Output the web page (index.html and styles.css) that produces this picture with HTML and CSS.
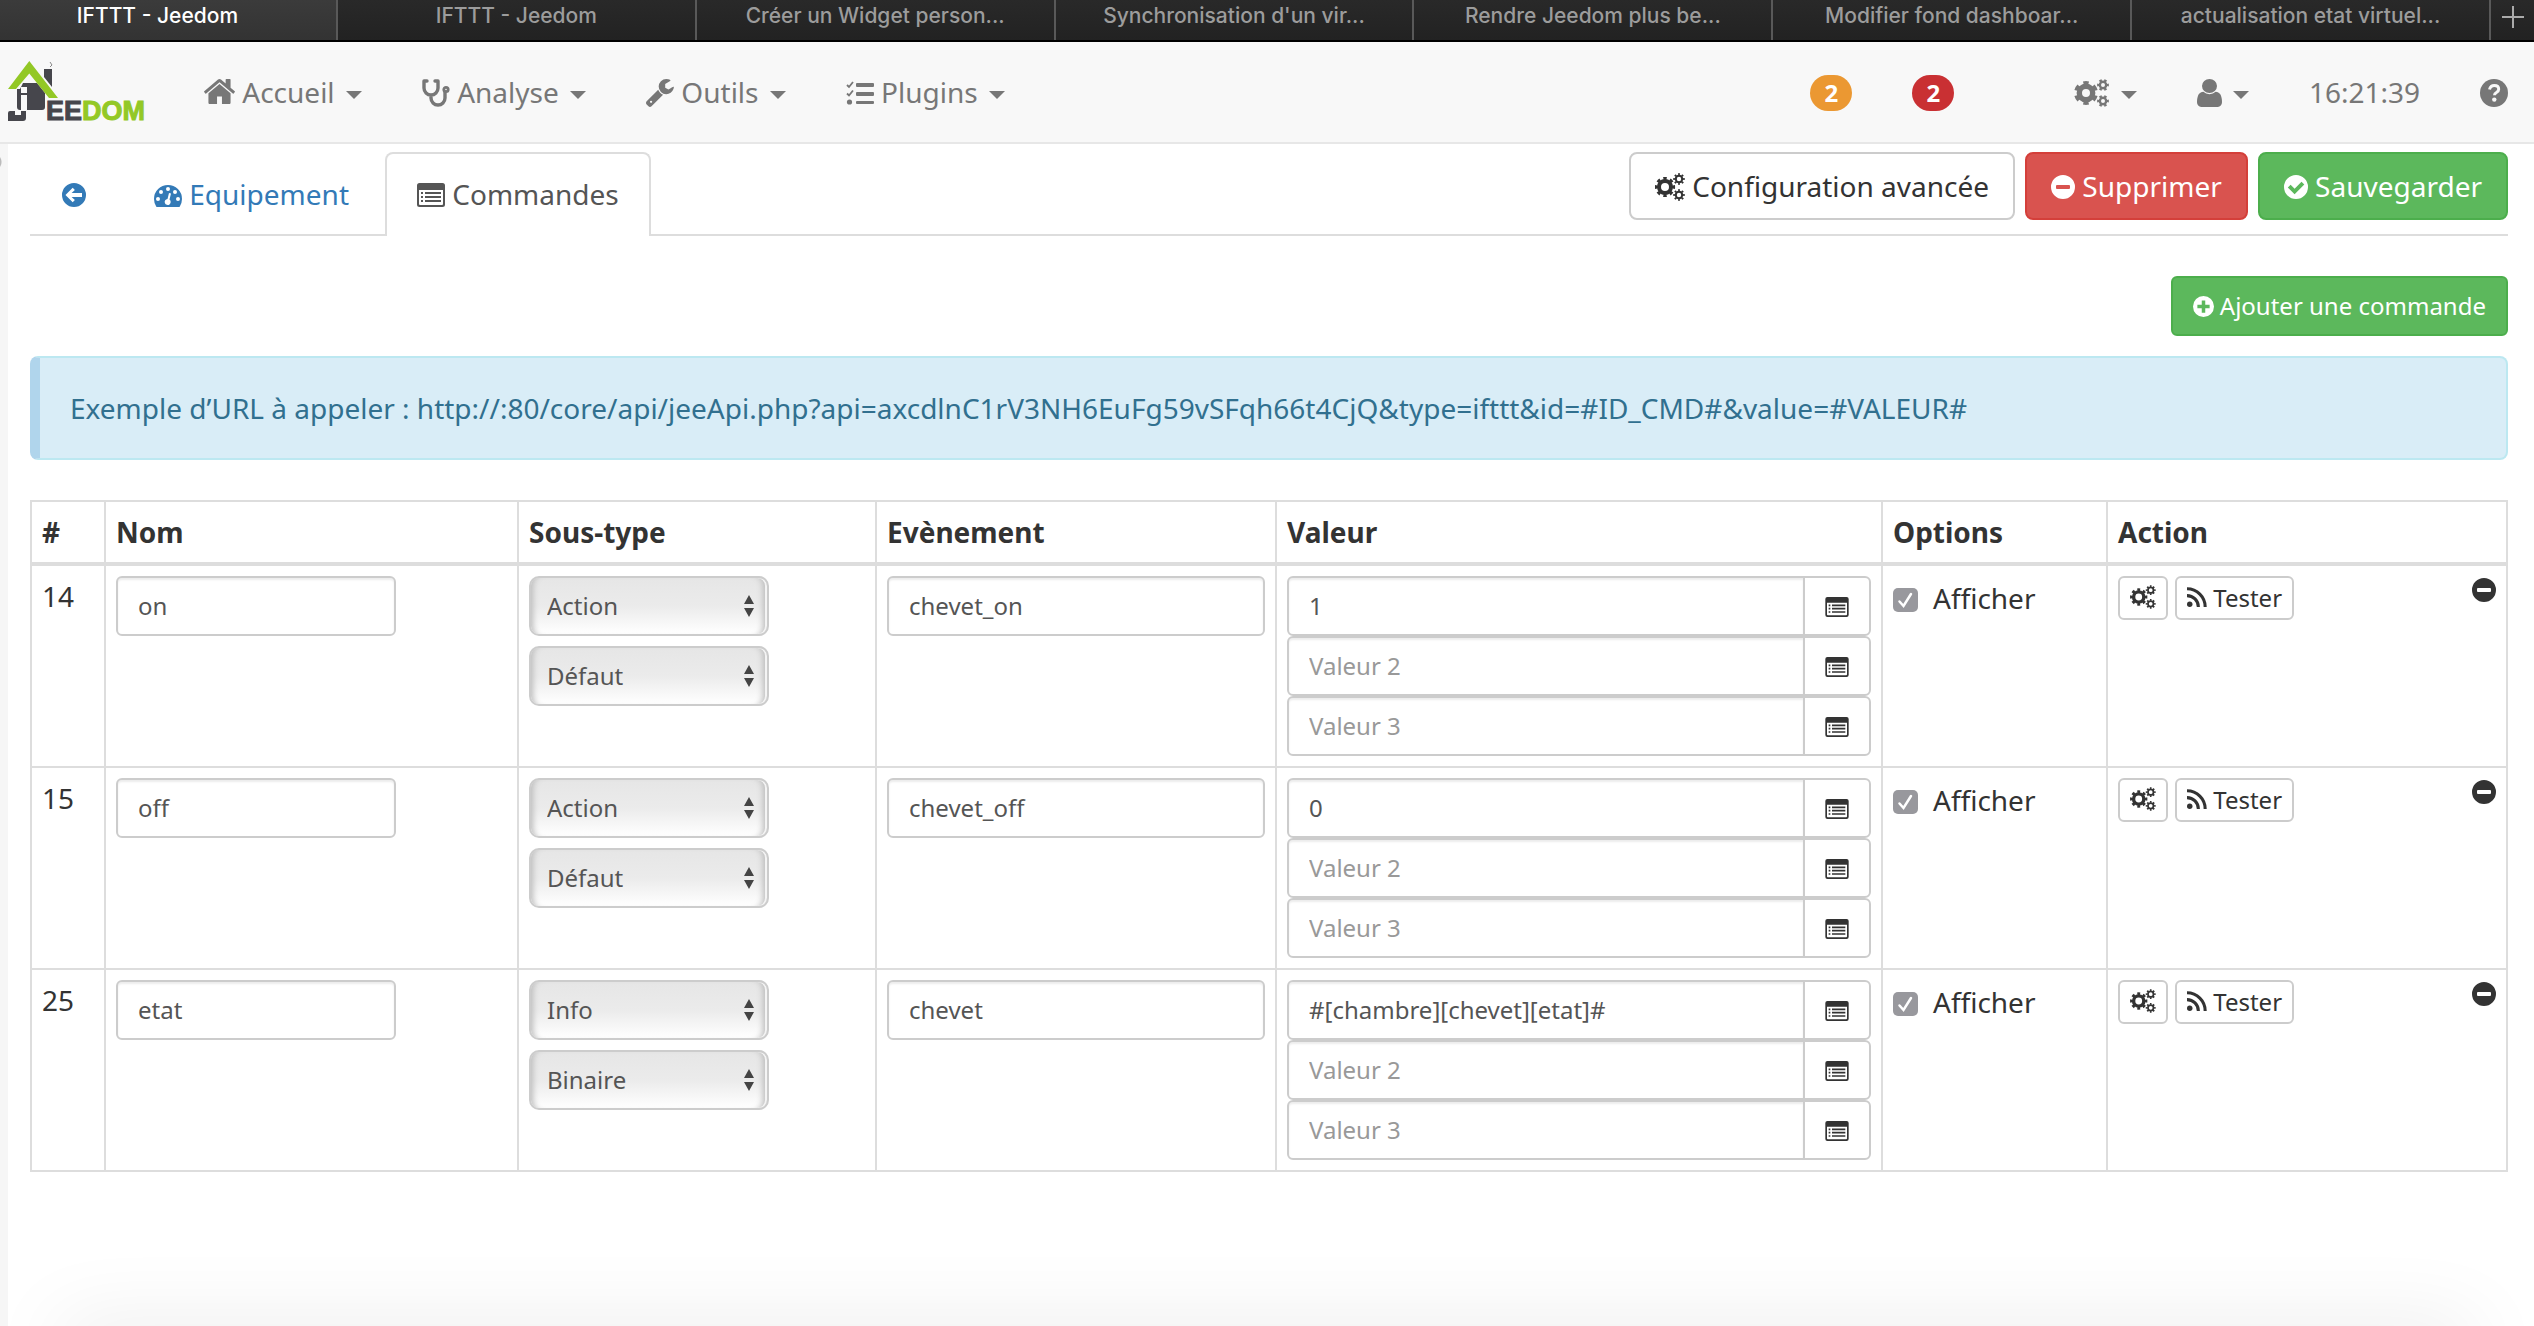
FILE: index.html
```
<!DOCTYPE html>
<html lang="fr">
<head>
<meta charset="utf-8">
<title>IFTTT - Jeedom</title>
<link rel="stylesheet" href="styles.css">
</head>
<body>
<svg class="sprite" aria-hidden="true">
  <symbol id="home" viewBox="89 253 1614 1283" preserveAspectRatio="none"><path d="M1472 992v480q0 26-19 45t-45 19h-384v-384h-256v384h-384q-26 0-45-19t-19-45v-480q0-1 .5-3t.5-3l575-474 575 474q1 2 1 6zm223-69l-62 74q-8 9-21 11h-3q-13 0-21-7l-692-577-692 577q-12 8-24 7-13-2-21-11l-62-74q-8-10-7-23.5t11-21.5l719-599q32-26 76-26t76 26l244 204v-195q0-14 9-23t23-9h192q14 0 23 9t9 23v408l219 182q10 8 11 21.5t-7 23.5z"/></symbol>
  <symbol id="stethoscope" viewBox="0 0 28 28"><g fill="none" stroke="currentColor" stroke-width="3.4" stroke-linecap="round" stroke-linejoin="round"><path d="M5 2H2v7a7 7 0 0 0 14 0V2h-3M9 16v3a7 7 0 0 0 14 0v-6"/><circle cx="24" cy="10.500" r="2.200" stroke-width="2.800"/></g></symbol>
  <symbol id="wrench" viewBox="85 128 1650 1650"><path d="M448 1472q0-26-19-45t-45-19-45 19-19 45 19 45 45 19 45-19 19-45zm644-420l-682 682q-37 37-90 37-52 0-91-37l-106-108q-38-36-38-90 0-53 38-91l681-681q39 98 114.500 173.500t173.500 114.500zm634-435q0 39-23 106-47 134-164.500 217.500t-258.500 83.500q-185 0-316.500-131.500t-131.500-316.500 131.500-316.500 316.500-131.500q58 0 121.500 16.500t107.500 46.500q16 11 16 28t-16 28l-293 169v224l193 107q5-3 79-48.500t135.500-81 70.500-35.500q15 0 23.500 10t8.500 25z"/></symbol>
  <symbol id="tasks" viewBox="0 0 28 24"><path d="M11 2h16q1 0 1 1v2q0 1-1 1H11q-1 0-1-1V3q0-1 1-1zm0 9h16q1 0 1 1v2q0 1-1 1H11q-1 0-1-1v-2q0-1 1-1zm0 9h16q1 0 1 1v1q0 1-1 1H11q-1 0-1-1v-1q0-1 1-1z"/><circle cx="3.500" cy="21" r="2.600"/><path d="M1 4l2 2 4-5M1 12.500l2 2 4-5" fill="none" stroke="currentColor" stroke-width="1.800"/></symbol>
  <symbol id="cogs" viewBox="0 0 30 28"><g fill="none" stroke="currentColor"><circle cx="10" cy="14" r="6" stroke-width="4"/><circle cx="10" cy="14" r="8.500" stroke-width="3.200" pathLength="16" stroke-dasharray="1 1" stroke-dashoffset="0.500"/><circle cx="24" cy="6" r="3.200" stroke-width="2"/><circle cx="24" cy="6" r="4.700" stroke-width="2.200" pathLength="16" stroke-dasharray="1 1" stroke-dashoffset="0.500"/><circle cx="24" cy="22" r="3.200" stroke-width="2"/><circle cx="24" cy="22" r="4.700" stroke-width="2.200" pathLength="16" stroke-dasharray="1 1" stroke-dashoffset="0.500"/></g></symbol>
  <symbol id="cogs-bold" viewBox="0 0 35 28"><g fill="none" stroke="currentColor"><circle cx="12" cy="14" r="6.700" stroke-width="5.400"/><circle cx="12" cy="14" r="10" stroke-width="4" pathLength="12" stroke-dasharray="1 1" stroke-dashoffset="-0.500"/><circle cx="29" cy="6" r="3.200" stroke-width="2.400"/><circle cx="29" cy="6" r="4.700" stroke-width="2.400" pathLength="12" stroke-dasharray="1 1" stroke-dashoffset="0.500"/><circle cx="29" cy="22" r="3.200" stroke-width="2.400"/><circle cx="29" cy="22" r="4.700" stroke-width="2.400" pathLength="12" stroke-dasharray="1 1" stroke-dashoffset="0.500"/></g></symbol>
  <symbol id="user" viewBox="256 128 1280 1536" preserveAspectRatio="none"><path d="M1536 1399q0 109-62.500 187t-150.500 78h-854q-88 0-150.500-78t-62.500-187q0-85 8.500-160.500t31.500-152 58.500-131 94-89 134.500-34.500q131 128 313 128t313-128q76 0 134.500 34.500t94 89 58.500 131 31.500 152 8.500 160.500zm-256-887q0 159-112.500 271.500t-271.500 112.500-271.500-112.500-112.500-271.500 112.500-271.500 271.500-112.500 271.500 112.500 112.500 271.500z"/></symbol>
  <symbol id="help" viewBox="0 0 28 28"><circle cx="14" cy="14" r="14"/><path d="M9.500 10.500q1-4 4.800-4 4.400 0 4.400 3.700 0 2-2.300 3.300-1.900 1-1.900 2.800" fill="none" stroke="#f8f8f8" stroke-width="3"/><circle cx="14.300" cy="20.600" r="2.200" fill="#f8f8f8"/></symbol>
  <symbol id="arrow" viewBox="0 0 24 24"><path fill-rule="evenodd" d="M12 0a12 12 0 1 1 0 24 12 12 0 0 1 0-24zM3.500 12l1.200 1.300 6 6 2.200-2.200-3.300-3.200H20v-3.800H9.600l3.300-3.200-2.200-2.200-6 6z"/></symbol>
  <symbol id="minus" viewBox="0 0 24 24"><path fill-rule="evenodd" d="M12 0a12 12 0 1 1 0 24 12 12 0 0 1 0-24zM6 10q-1 0-1 1v2q0 1 1 1h12q1 0 1-1v-2q0-1-1-1z"/></symbol>
  <symbol id="plus" viewBox="0 0 24 24"><path fill-rule="evenodd" d="M12 0a12 12 0 1 1 0 24 12 12 0 0 1 0-24zM10 5v5H5v4h5v5h4v-5h5v-4h-5V5z"/></symbol>
  <symbol id="check" viewBox="0 0 24 24"><path fill-rule="evenodd" d="M12 0a12 12 0 1 1 0 24 12 12 0 0 1 0-24zM3.800 12.500l6.800 6.800L20.300 9.500l-2.800-2.700-6.900 6.900-4-4z"/></symbol>
  <symbol id="gauge" viewBox="0 0 28 24"><path fill-rule="evenodd" d="M14 2a14 14 0 0 1 14 14q0 4-2.200 7.500-.3.500-1 .5H3.200q-.7 0-1-.5Q0 20 0 16A14 14 0 0 1 14 2zM4 14a2 2 0 1 0 0 4 2 2 0 0 0 0-4zm3-7a2 2 0 1 0 0 4 2 2 0 0 0 0-4zm7-3a2 2 0 1 0 0 4 2 2 0 0 0 0-4zm7 3a2 2 0 1 0 0 4 2 2 0 0 0 0-4zm3 7a2 2 0 1 0 0 4 2 2 0 0 0 0-4zm-9-4l-1.500 6a3 3 0 1 0 2 .6L17 10.500z"/></symbol>
  <symbol id="list" viewBox="0 0 28 24"><path fill-rule="evenodd" d="M2.500 0h23Q28 0 28 2.500v19q0 2.500-2.500 2.500h-23Q0 24 0 21.500v-19Q0 0 2.500 0zM2 7v14q0 1 1 1h22q1 0 1-1V7z"/><path d="M4 9h2v2H4zm4 0h16v2H8zm-4 4h2v2H4zm4 0h16v2H8zm-4 4h2v2H4zm4 0h16v2H8z"/></symbol>
  <symbol id="rss" viewBox="0 0 22 22"><circle cx="3" cy="19" r="3"/><path d="M0 9.500A12.500 12.500 0 0 1 12.500 22M0 2a20 20 0 0 1 20 20" fill="none" stroke="currentColor" stroke-width="3.400"/></symbol>
</svg>

<nav class="browser-tabs" aria-label="Onglets">
  <a class="browser-tab first active" href="#">IFTTT - Jeedom</a>
  <a class="browser-tab" href="#">IFTTT - Jeedom</a>
  <a class="browser-tab" href="#">Créer un Widget person...</a>
  <a class="browser-tab" href="#">Synchronisation d'un vir...</a>
  <a class="browser-tab" href="#">Rendre Jeedom plus be...</a>
  <a class="browser-tab" href="#">Modifier fond dashboar...</a>
  <a class="browser-tab" href="#">actualisation etat virtuel...</a>
  <button class="new-tab" type="button" aria-label="Nouvel onglet"></button>
</nav>

<header class="navbar">
  <a class="logo" href="#" aria-label="Jeedom">
    <svg width="144" height="78" viewBox="0 -8 144 78">
      <g fill="#46464c">
        <path d="M36 8h8v18l-8-10zM15 22h14l8 10v14q0 3-3 3H19v-23h-6v23h-1q-3 0-3-3V28h3z"/>
        <path d="M13 28h6v4h-6z" fill="#f8f8f8"/>
        <path d="M13 32h6v2h-6zM2 50h5v4h6v-4h5v7q0 3-3 3H0V52q0-2 2-2z"/>
      </g>
      <path d="M13 34h6v16h-6z" fill="#f8f8f8"/>
      <path d="M21.300 0L50 37h-9L21.300 12.500 8 28H0z" fill="#93c826"/>
      <path d="M42 1l2 3-2 2" fill="none" stroke="#888"/>
      <text class="logo-text" x="38" y="59" fill="#46464c" stroke="#46464c">EE<tspan fill="#93c826" stroke="#93c826">DOM</tspan></text>
    </svg>
  </a>
  <div class="menu">
    <a class="menu-item" href="#"><svg class="icon i-home"><use href="#home"/></svg> Accueil <i class="caret"></i></a>
    <a class="menu-item" href="#"><svg class="icon i-28"><use href="#stethoscope"/></svg> Analyse <i class="caret"></i></a>
    <a class="menu-item" href="#"><svg class="icon i-28"><use href="#wrench"/></svg> Outils <i class="caret"></i></a>
    <a class="menu-item" href="#"><svg class="icon i-wide"><use href="#tasks"/></svg> Plugins <i class="caret"></i></a>
  </div>
  <div class="tools">
    <a class="badge orange" href="#">2</a>
    <a class="badge red" href="#">2</a>
    <a class="menu-item settings" href="#" aria-label="Réglages"><svg class="icon i-cogs-bold"><use href="#cogs-bold"/></svg> <i class="caret"></i></a>
    <a class="menu-item" href="#" aria-label="Utilisateur"><svg class="icon i-user"><use href="#user"/></svg> <i class="caret"></i></a>
    <span>16:21:39</span>
    <a class="menu-item" href="#" aria-label="Aide"><svg class="icon i-28"><use href="#help"/></svg></a>
  </div>
</header>

<div class="page">
  <aside class="rail"></aside>
  <main class="content">
    <div class="toolbar">
      <nav class="tabs">
        <a class="tab" href="#" aria-label="Retour"><svg class="icon i-24"><use href="#arrow"/></svg></a>
        <a class="tab" href="#"><svg class="icon i-wide"><use href="#gauge"/></svg> Equipement</a>
        <a class="tab current" href="#"><svg class="icon i-wide"><use href="#list"/></svg> Commandes</a>
      </nav>
      <div class="actions">
        <button class="btn" type="button"><svg class="icon i-cogs"><use href="#cogs"/></svg> Configuration avancée</button>
        <button class="btn danger" type="button"><svg class="icon i-24"><use href="#minus"/></svg> Supprimer</button>
        <button class="btn success" type="button"><svg class="icon i-24"><use href="#check"/></svg> Sauvegarder</button>
      </div>
    </div>

    <div class="add-row">
      <button class="btn medium success" type="button"><svg class="icon i-21"><use href="#plus"/></svg> Ajouter une commande</button>
    </div>

    <p class="alert">Exemple d’URL à appeler : http://:80/core/api/jeeApi.php?api=axcdlnC1rV3NH6EuFg59vSFqh66t4CjQ&amp;type=ifttt&amp;id=#ID_CMD#&amp;value=#VALEUR#</p>

    <table class="commands">
      <colgroup><col class="c-id"><col class="c-name"><col class="c-type"><col class="c-event"><col><col class="c-options"><col class="c-action"></colgroup>
      <thead>
        <tr><th>#</th><th>Nom</th><th>Sous-type</th><th>Evènement</th><th>Valeur</th><th>Options</th><th>Action</th></tr>
      </thead>
      <tbody>
        <tr>
          <td>14</td>
          <td><input class="field name" type="text" aria-label="Nom" value="on"></td>
          <td><div class="stack"><select class="select" aria-label="Type"><option>Action</option></select><select class="select" aria-label="Sous-type"><option>Défaut</option></select></div></td>
          <td><input class="field" type="text" aria-label="Evènement" value="chevet_on"></td>
          <td>
            <div class="group"><input class="field" type="text" aria-label="Valeur 1" value="1"><button class="addon" type="button" aria-label="Choisir"><svg class="icon i-list"><use href="#list"/></svg></button></div>
            <div class="group"><input class="field" type="text" aria-label="Valeur 2" placeholder="Valeur 2"><button class="addon" type="button" aria-label="Choisir"><svg class="icon i-list"><use href="#list"/></svg></button></div>
            <div class="group"><input class="field" type="text" aria-label="Valeur 3" placeholder="Valeur 3"><button class="addon" type="button" aria-label="Choisir"><svg class="icon i-list"><use href="#list"/></svg></button></div>
          </td>
          <td><label class="check"><input type="checkbox" checked>Afficher</label></td>
          <td><div class="row-actions"><button class="btn small" type="button" aria-label="Configurer"><svg class="icon i-26"><use href="#cogs"/></svg></button><button class="btn small" type="button"><svg class="icon i-rss"><use href="#rss"/></svg> Tester</button><button class="remove" type="button" aria-label="Supprimer"><svg class="icon i-24"><use href="#minus"/></svg></button></div></td>
        </tr>
        <tr>
          <td>15</td>
          <td><input class="field name" type="text" aria-label="Nom" value="off"></td>
          <td><div class="stack"><select class="select" aria-label="Type"><option>Action</option></select><select class="select" aria-label="Sous-type"><option>Défaut</option></select></div></td>
          <td><input class="field" type="text" aria-label="Evènement" value="chevet_off"></td>
          <td>
            <div class="group"><input class="field" type="text" aria-label="Valeur 1" value="0"><button class="addon" type="button" aria-label="Choisir"><svg class="icon i-list"><use href="#list"/></svg></button></div>
            <div class="group"><input class="field" type="text" aria-label="Valeur 2" placeholder="Valeur 2"><button class="addon" type="button" aria-label="Choisir"><svg class="icon i-list"><use href="#list"/></svg></button></div>
            <div class="group"><input class="field" type="text" aria-label="Valeur 3" placeholder="Valeur 3"><button class="addon" type="button" aria-label="Choisir"><svg class="icon i-list"><use href="#list"/></svg></button></div>
          </td>
          <td><label class="check"><input type="checkbox" checked>Afficher</label></td>
          <td><div class="row-actions"><button class="btn small" type="button" aria-label="Configurer"><svg class="icon i-26"><use href="#cogs"/></svg></button><button class="btn small" type="button"><svg class="icon i-rss"><use href="#rss"/></svg> Tester</button><button class="remove" type="button" aria-label="Supprimer"><svg class="icon i-24"><use href="#minus"/></svg></button></div></td>
        </tr>
        <tr>
          <td>25</td>
          <td><input class="field name" type="text" aria-label="Nom" value="etat"></td>
          <td><div class="stack"><select class="select" aria-label="Type"><option>Info</option></select><select class="select" aria-label="Sous-type"><option>Binaire</option></select></div></td>
          <td><input class="field" type="text" aria-label="Evènement" value="chevet"></td>
          <td>
            <div class="group"><input class="field" type="text" aria-label="Valeur 1" value="#[chambre][chevet][etat]#"><button class="addon" type="button" aria-label="Choisir"><svg class="icon i-list"><use href="#list"/></svg></button></div>
            <div class="group"><input class="field" type="text" aria-label="Valeur 2" placeholder="Valeur 2"><button class="addon" type="button" aria-label="Choisir"><svg class="icon i-list"><use href="#list"/></svg></button></div>
            <div class="group"><input class="field" type="text" aria-label="Valeur 3" placeholder="Valeur 3"><button class="addon" type="button" aria-label="Choisir"><svg class="icon i-list"><use href="#list"/></svg></button></div>
          </td>
          <td><label class="check"><input type="checkbox" checked>Afficher</label></td>
          <td><div class="row-actions"><button class="btn small" type="button" aria-label="Configurer"><svg class="icon i-26"><use href="#cogs"/></svg></button><button class="btn small" type="button"><svg class="icon i-rss"><use href="#rss"/></svg> Tester</button><button class="remove" type="button" aria-label="Supprimer"><svg class="icon i-24"><use href="#minus"/></svg></button></div></td>
        </tr>
      </tbody>
    </table>
  </main>
</div>
<div class="bottom-shade"></div>
</body>
</html>
```
FILE: styles.css
```
* { box-sizing: border-box; }

body {
  margin: 0;
  min-height: 100vh;
  display: flex;
  flex-direction: column;
  background: #fff;
  color: #333;
  font-family: "Noto Sans", sans-serif;
  font-size: 28px;
  line-height: 40px;
}

a { color: inherit; text-decoration: none; }
button, input, select { font: inherit; color: inherit; margin: 0; }

.sprite { position: absolute; width: 0; height: 0; }

/* Icons */
.icon { display: inline-block; fill: currentColor; vertical-align: -2px; overflow: visible; }
.i-home { width: 31px; height: 25px; vertical-align: -1px; }
.i-28 { width: 28px; height: 28px; vertical-align: -4px; }
.i-24 { width: 24px; height: 24px; }
.i-21 { width: 21px; height: 21px; }
.i-26 { width: 26px; height: 24px; }
.i-wide { width: 28px; height: 24px; }
.i-list { width: 24px; height: 20px; vertical-align: 0; }
.i-cogs { width: 30px; height: 28px; vertical-align: -4px; }
.i-cogs-bold { width: 35px; height: 28px; vertical-align: -4px; }
.i-user { width: 25px; height: 28px; vertical-align: -4px; }
.i-rss { width: 20px; height: 20px; vertical-align: 0; }

/* Browser tab strip */
.browser-tabs {
  display: flex;
  height: 42px;
  overflow: hidden;
  background: linear-gradient(#292929, #222);
  border-bottom: 2px solid #000;
  font: 500 21px/20px Inter, sans-serif;
  color: #9c9c9c;
}
.browser-tab {
  flex: 1;
  padding-top: 6px;
  border-right: 2px solid #595959;
  text-align: center;
  white-space: nowrap;
}
.browser-tab.first { margin-left: -21px; }
.browser-tab.active { background: linear-gradient(#3b3b3b, #333); color: #fff; }
.new-tab {
  width: 43px;
  border: 0;
  background:
    linear-gradient(#aaa, #aaa) 21px 6px / 2px 22px no-repeat,
    linear-gradient(#aaa, #aaa) 11px 16px / 22px 2px no-repeat;
}

/* Application bar */
.navbar {
  display: flex;
  align-items: center;
  height: 102px;
  padding: 0 26px 0 8px;
  background: #f8f8f8;
  border-bottom: 2px solid #e7e7e7;
  color: #777;
}
.logo { display: flex; margin-right: 52px; }
.logo-text { font: bold 27px "Liberation Sans", sans-serif; stroke-width: 1px; }
.menu, .tools { display: flex; align-items: center; gap: 60px; white-space: nowrap; }
.tools { margin-left: auto; }
.settings { margin-left: 60px; }
.caret {
  display: inline-block;
  margin-left: 4px;
  vertical-align: 4px;
  border: 8px solid transparent;
  border-top-color: currentColor;
  border-bottom: 0;
}
.badge {
  width: 42px;
  height: 36px;
  margin-top: 2px;
  border-radius: 18px;
  color: #fff;
  font-size: 24px;
  font-weight: 700;
  line-height: 36px;
  text-align: center;
}
.orange { background: #eb9832; }
.red { background: #c93033; }

/* Page */
.page { flex: 1; display: flex; }
.rail {
  width: 8px;
  background: radial-gradient(circle at -7px 18px, #bbb 8px, transparent 9px) #f6f6f6;
}
.content { flex: 1; min-width: 0; padding: 8px 26px 40px 22px; }

.toolbar {
  display: flex;
  justify-content: space-between;
  border-bottom: 2px solid #ddd;
}
.tabs { display: flex; gap: 4px; margin-bottom: -2px; }
.tab {
  padding: 20px 30px;
  border: 2px solid transparent;
  border-bottom: 0;
  border-radius: 8px 8px 0 0;
  color: #337ab7;
}
.tab.current { height: 84px; background: #fff; border-color: #ddd; color: #555; }
.actions { display: flex; gap: 10px; align-items: flex-start; }

.btn {
  padding: 12px 24px;
  border: 2px solid #ccc;
  border-radius: 8px;
  background: #fff;
  white-space: nowrap;
}
.danger { background: #d9534f; border-color: #d43f3a; color: #fff; }
.success { background: #5cb85c; border-color: #4cae4c; color: #fff; }
.medium { padding: 10px 20px; border-radius: 6px; font-size: 24px; line-height: 36px; }
.small { padding: 2px 10px; border-radius: 6px; font-size: 24px; line-height: 36px; }

.add-row { display: flex; justify-content: flex-end; margin-top: 40px; }

.alert {
  margin: 20px 0 40px;
  padding: 30px;
  border: 2px solid #bce8f1;
  border-left: 10px solid #b0d5ec;
  border-radius: 8px;
  background: #d9edf7;
  color: #31708f;
}

/* Command table */
.commands {
  width: 100%;
  table-layout: fixed;
  border-collapse: separate;
  border-spacing: 0;
  border: 2px solid #ddd;
  border-width: 2px 0 0 2px;
}
.commands th, .commands td {
  padding: 10px;
  border: 0 solid #ddd;
  border-width: 0 2px 2px 0;
  text-align: left;
  vertical-align: top;
}
.commands th { border-bottom-width: 4px; }
.c-id { width: 74px; }
.c-name { width: 413px; }
.c-type { width: 358px; }
.c-event { width: 400px; }
.c-options { width: 225px; }
.c-action { width: 400px; }

.field {
  display: block;
  width: 100%;
  height: 60px;
  padding: 9px 20px 11px;
  border: 2px solid #ccc;
  border-radius: 6px;
  background: #fff;
  box-shadow: inset 0 2px 2px rgba(0, 0, 0, 0.075);
  color: #555;
  font-size: 24px;
}
.field::placeholder { color: #999; opacity: 1; }
.field.name { width: 280px; }

.group { display: flex; }
.group .field { flex: 1; min-width: 0; border-radius: 6px 0 0 6px; }
.addon {
  width: 68px;
  margin-left: -2px;
  border: 2px solid #ccc;
  border-radius: 0 6px 6px 0;
  background: #fff;
  line-height: 20px;
}

.stack { display: flex; flex-direction: column; gap: 10px; }
.select {
  appearance: none;
  width: 240px;
  height: 60px;
  padding: 0 16px;
  border: 2px solid #ccc;
  border-radius: 10px;
  background:
    url("data:image/svg+xml,%3Csvg xmlns='http://www.w3.org/2000/svg' width='12' height='22'%3E%3Cpath fill='%23444' d='M6 0l5 9H1zM6 22l5-9H1z'/%3E%3C/svg%3E") right 12px center no-repeat,
    linear-gradient(#e6e6e6, #ebebeb 50%, #fff);
  box-shadow: inset 8px 0 6px -6px #bbb, inset -2px 0 0 #f4f4f4, inset -9px 0 6px -5px #bbb;
  color: #555;
  font-size: 24px;
}

.check { display: flex; align-items: center; gap: 15px; margin-top: 2px; }
.check input {
  appearance: none;
  width: 25px;
  height: 24px;
  margin-top: 4px;
  border-radius: 5px;
  background:
    url("data:image/svg+xml,%3Csvg xmlns='http://www.w3.org/2000/svg' width='24' height='24'%3E%3Cpath fill='none' stroke='white' stroke-width='2.500' stroke-linecap='round' d='M6.500 13.500l4 4.500 7.500-12'/%3E%3C/svg%3E") no-repeat,
    #98989d;
}

.row-actions { display: flex; align-items: flex-start; gap: 7px; }
.remove {
  display: flex;
  margin: 2px 0 0 auto;
  padding: 0;
  border: 0;
  background: none;
}

/* Soft shade that rises from the lower edge of the window */
.bottom-shade {
  position: fixed;
  top: 100%;
  left: 60px;
  right: 60px;
  height: 40px;
  box-shadow: 0 0 80px rgba(0, 0, 0, 0.1);
  pointer-events: none;
}
```
